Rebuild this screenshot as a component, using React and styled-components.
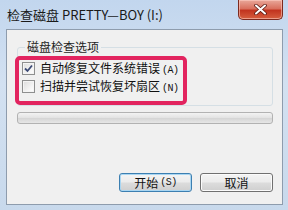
import React from 'react';
import styled, { createGlobalStyle } from 'styled-components';

const Global = createGlobalStyle`
  html, body { margin: 0; padding: 0; background: #fff; }
  #root { width: 288px; height: 210px; overflow: hidden; }
`;

const cjk = `"Noto Sans CJK SC", "Liberation Sans", sans-serif`;

const Frame = styled.div`
  box-sizing: border-box;
  width: 288px;
  height: 210px;
  display: flex;
  flex-direction: column;
  padding: 0 5px 5px 6px;
  background: linear-gradient(180deg, #c2d6ee 0%, #d3e1f1 40%, #c8d9ec 100%);
  font-family: ${cjk};
`;

const TitleBar = styled.div`
  height: 29px;
  display: flex;
  align-items: flex-start;
  justify-content: space-between;
`;

const Title = styled.div`
  font-size: 13px;
  line-height: 13px;
  color: #1a1a1a;
  padding-top: 8px;
  padding-left: 1px;
  white-space: nowrap;
`;

const CloseButton = styled.div`
  box-sizing: border-box;
  width: 45px;
  height: 20px;
  border: 1px solid #7d2a1f;
  border-top: none;
  border-radius: 0 0 5px 5px;
  background: linear-gradient(180deg, #e9a89a 0%, #d9705e 45%, #c2341f 55%, #d65f3f 100%);
  box-shadow: inset 0 0 0 1px rgba(255, 210, 200, 0.55);
  display: flex;
  align-items: center;
  justify-content: center;
`;

const Client = styled.div`
  flex: 1;
  box-sizing: border-box;
  border: 1px solid #8e9cad;
  background: #f0f0f0;
  display: flex;
  flex-direction: column;
  padding: 11px 9px 12px 10px;
`;

const Group = styled.fieldset`
  margin: 0;
  padding: 0 0 3px 0;
  border: 1px solid #d5dfe5;
  border-radius: 3px;
  height: 65px;
  box-sizing: border-box;
  position: relative;
`;

const Legend = styled.legend`
  font-size: 12px;
  line-height: 12px;
  color: #1e1e1e;
  padding: 0 2px;
  margin-left: 7px;
`;

const Options = styled.div`
  box-sizing: border-box;
  margin: 3px 0 0 -3px;
  width: 172px;
  height: 49px;
  border: 4px solid #e2245f;
  border-radius: 5px;
  display: flex;
  flex-direction: column;
  padding: 2px 0 0 3px;
  gap: 5px;
`;

const Row = styled.div`
  display: flex;
  align-items: center;
  gap: 5px;
  height: 13px;
`;

const Box = styled.span`
  box-sizing: border-box;
  width: 13px;
  height: 13px;
  border: 1px solid #8e8f8f;
  background: linear-gradient(135deg, #dcdcdc 0%, #f6f6f6 70%, #ffffff 100%);
  box-shadow: inset 0 0 0 1px #f4f4f4;
  display: flex;
  align-items: center;
  justify-content: center;
`;

const Label = styled.span`
  font-size: 12px;
  line-height: 13px;
  color: #111;
  white-space: nowrap;
`;

const Key = styled.span`
  font-family: "Liberation Mono", "DejaVu Sans Mono", monospace;
  font-size: 10px;
  letter-spacing: -0.5px;
  margin-left: 2px;
`;

const Progress = styled.div`
  margin-top: 6px;
  height: 12px;
  box-sizing: border-box;
  border: 1px solid #b2b2b2;
  border-radius: 3px;
  background: linear-gradient(180deg, #f3f3f3 0%, #e2e2e2 50%, #d6d6d6 55%, #e6e6e6 100%);
`;

const Spacer = styled.div`
  flex: 1;
`;

const Buttons = styled.div`
  display: flex;
  justify-content: flex-end;
  gap: 8px;
`;

const Button = styled.div`
  box-sizing: border-box;
  width: 73px;
  height: 19px;
  border: 1px solid ${p => (p.$default ? '#3c7fb1' : '#707070')};
  border-radius: 3px;
  background: linear-gradient(180deg, #f4f4f4 0%, #ebebeb 48%, #dcdcdc 52%, #cfcfcf 100%);
  box-shadow: inset 0 0 0 1px ${p => (p.$default ? '#a9d6f2' : '#fbfbfb')};
  display: flex;
  align-items: center;
  justify-content: center;
  font-size: 12px;
  color: #111;
`;

const Check = () => (
  <svg width="9" height="9" viewBox="0 0 9 9">
    <path d="M1 4.5 L3.5 7 L8 1.5" fill="none" stroke="#3c4a75" strokeWidth="1.8" />
  </svg>
);

const CloseX = () => (
  <svg width="13" height="11" viewBox="0 0 13 11">
    <path d="M2 1.5 L11 9.5 M11 1.5 L2 9.5" stroke="#5a1a12" strokeWidth="3.6" strokeLinecap="round" />
    <path d="M2 1.5 L11 9.5 M11 1.5 L2 9.5" stroke="#ffffff" strokeWidth="2" strokeLinecap="round" />
  </svg>
);

const App = () => (
  <>
    <Global />
    <Frame>
      <TitleBar>
        <Title>检查磁盘 PRETTY—BOY (I:)</Title>
        <CloseButton><CloseX /></CloseButton>
      </TitleBar>
      <Client>
        <Group>
          <Legend>磁盘检查选项</Legend>
          <Options>
            <Row>
              <Box><Check /></Box>
              <Label>自动修复文件系统错误<Key>(A)</Key></Label>
            </Row>
            <Row>
              <Box />
              <Label>扫描并尝试恢复坏扇区<Key>(N)</Key></Label>
            </Row>
          </Options>
        </Group>
        <Progress />
        <Spacer />
        <Buttons>
          <Button $default>开始<Key>(S)</Key></Button>
          <Button>取消</Button>
        </Buttons>
      </Client>
    </Frame>
  </>
);

export default App;
